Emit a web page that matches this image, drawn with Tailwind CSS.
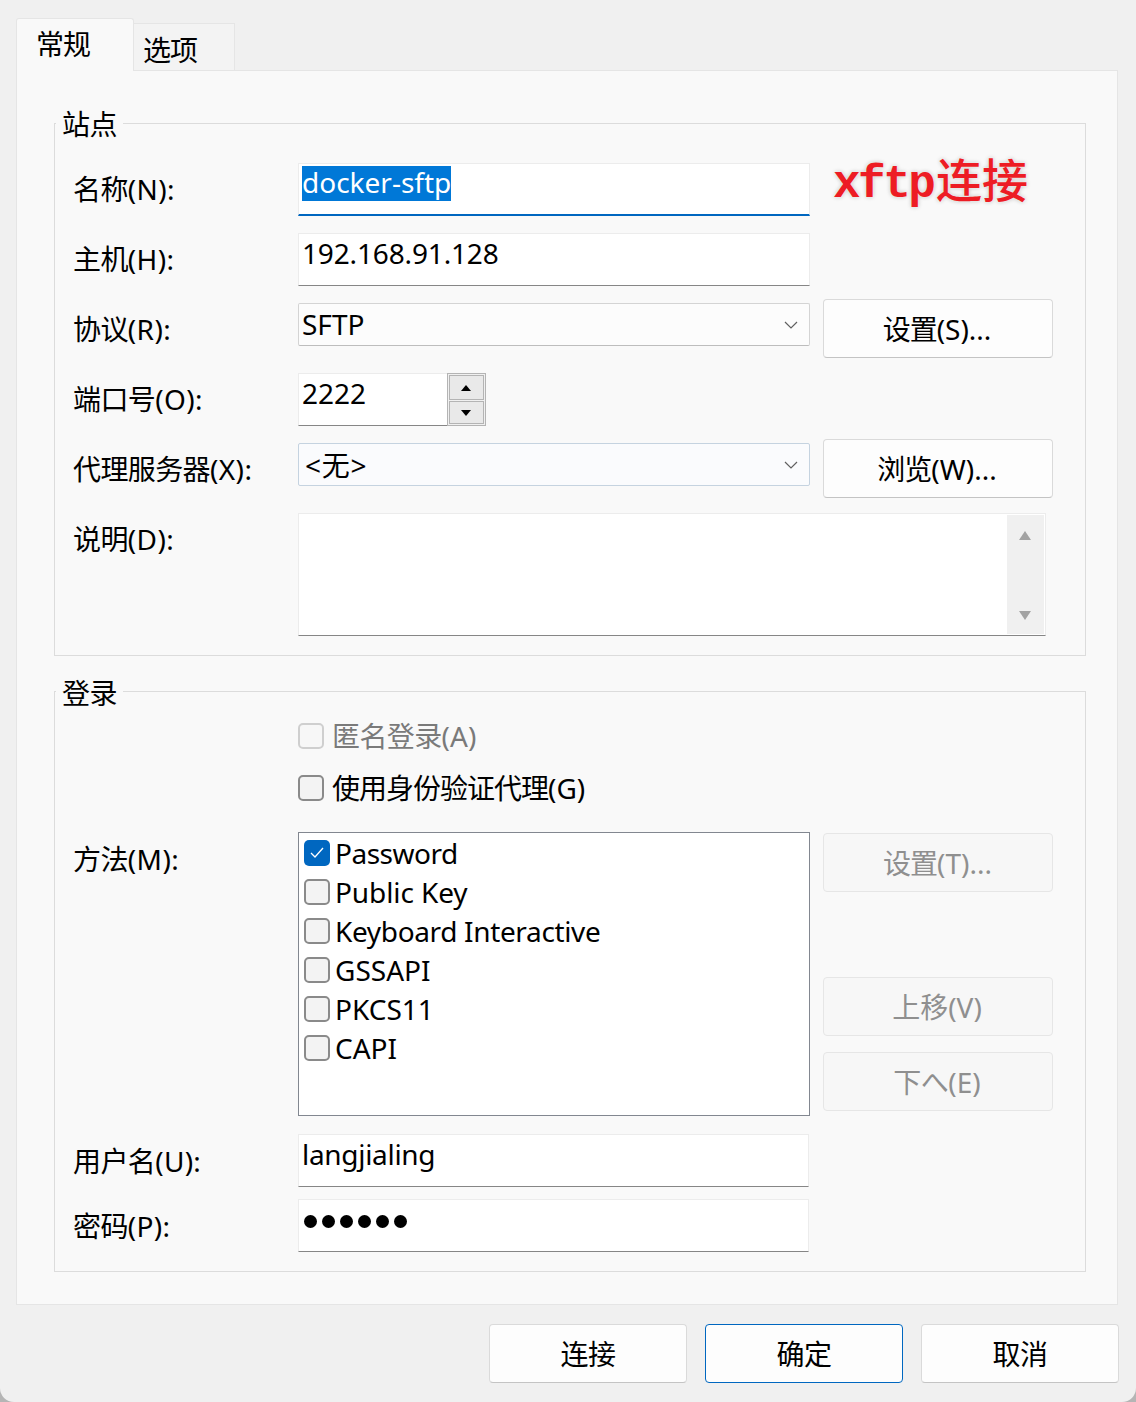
<!DOCTYPE html>
<html lang="en">
<head>
    <meta charset="UTF-8">
    <title>新建会话属性</title>
    <script src="https://cdn.jsdelivr.net/npm/@tailwindcss/browser@4"></script>
</head>
<body class="bg-[#b5b5b5]">
    <div class="w-[1136px] h-[1402px] overflow-hidden rounded-b-[14px] bg-[#f0f0f0] text-[28px] leading-[40px] text-black font-['Noto_Sans','Noto_Sans_CJK_SC',sans-serif]">
        <!-- Tabs -->
        <div class="flex items-end h-[71px] pl-[16px] relative z-10">
            <div class="w-[118px] h-[53px] pl-[19px] pt-[5px] tracking-[-1px] bg-[#f9f9f9] border border-b-0 border-[#e5e5e5] rounded-t-[3px]">常规</div>
            <div class="w-[101px] h-[48px] pl-[9px] pt-[6px] tracking-[-1px] bg-[#f3f3f3] border border-l-0 border-[#e5e5e5]">选项</div>
        </div>

        <!-- Panel -->
        <div class="mx-[16px] -mt-[1px] h-[1235px] px-[37px] pt-[52px] bg-[#f9f9f9] border border-[#e5e5e5] w-[1102px]">
            <!-- Site group -->
            <div class="relative h-[533px] w-[1032px] pl-[18px] pt-[39px] border border-[#dcdcdc]">
                <span class="absolute -top-[20px] left-[1px] px-[6px] tracking-[-0.5px] bg-[#f9f9f9]">站点</span>

                <div class="flex h-[70px]">
                    <div class="w-[225px] pt-[6px] tracking-[0.4px]"><span class="tracking-[-0.6px]">名称</span>(N):</div>
                    <div class="w-[512px] h-[53px] pl-[3px] pt-[2px] flex items-start bg-white border border-[#ececec] border-b-2 border-b-[#0067c0]">
                        <span class="h-[35px] leading-[33px] bg-[#0078d7] text-white">docker-sftp</span>
                    </div>
                    <div class="ml-[23px] -mt-[14px] h-[56px] flex items-center text-[#ed1c24] [text-shadow:0_0_2px_#fff,0_0_4px_#b5b5b5] whitespace-nowrap">
                        <span class="w-[103px] mt-[16px] text-[46px] font-bold tracking-[-2.5px] font-['Liberation_Mono',monospace]">xftp</span>
                        <span class="text-[46px] font-medium font-['Noto_Sans_CJK_SC',sans-serif]">连接</span>
                    </div>
                </div>

                <div class="flex h-[70px]">
                    <div class="w-[225px] pt-[6px] tracking-[0.4px]"><span class="tracking-[-0.6px]">主机</span>(H):</div>
                    <div class="w-[512px] h-[53px] pl-[3px] leading-[38px] tracking-[-0.15px] bg-white border border-[#ececec] border-b-[#868686]">192.168.91.128</div>
                </div>

                <div class="flex h-[70px]">
                    <div class="w-[225px] pt-[6px] tracking-[0.4px]"><span class="tracking-[-0.6px]">协议</span>(R):</div>
                    <div class="w-[512px] h-[43px] pl-[3px] flex items-center justify-between bg-[#fcfcfc] border border-[#d4d4d4] border-b-[#bdbdbd] rounded-[2px]">
                        <span class="-mt-[2px]">SFTP</span>
                        <svg class="mr-[11px]" width="14" height="8" viewBox="0 0 14 8" fill="none" stroke="#606060" stroke-width="1.2"><path d="M1 1l6 6 6-6"/></svg>
                    </div>
                    <button class="ml-[13px] -mt-[4px] pr-[2px] w-[230px] h-[59px] bg-[#fdfdfd] border border-[#dadada] border-b-[#c4c4c4] rounded-[4px]"><span class="tracking-[-1px]">设置</span>(S)...</button>
                </div>

                <div class="flex h-[70px]">
                    <div class="w-[225px] pt-[6px] tracking-[0.4px]"><span class="tracking-[-0.6px]">端口号</span>(O):</div>
                    <div class="w-[149px] h-[53px] pl-[3px] leading-[38px] bg-white border border-[#ececec] border-b-[#868686] border-r-0">2222</div>
                    <div class="w-[39px] h-[53px] flex flex-col justify-between p-[1px] bg-[#f0f0f0] border border-[#b4b4b4]">
                        <div class="h-[25px] flex items-center justify-center pr-[1px] bg-[#e9e9e9] border border-[#b4b4b4]">
                            <svg width="10" height="6" viewBox="0 0 10 6"><path d="M5 0l5 6H0z" fill="#000"/></svg>
                        </div>
                        <div class="h-[23px] flex items-center justify-center pr-[1px] bg-[#e9e9e9] border border-[#b4b4b4]">
                            <svg width="10" height="6" viewBox="0 0 10 6"><path d="M0 0h10L5 6z" fill="#000"/></svg>
                        </div>
                    </div>
                </div>

                <div class="flex h-[70px]">
                    <div class="w-[225px] pt-[6px] tracking-[0.4px]"><span class="tracking-[-0.6px]">代理服务器</span>(X):</div>
                    <div class="w-[512px] h-[43px] pl-[6px] flex items-center justify-between bg-[#fafbfd] border border-[#c5d3e0] rounded-[2px]">
                        <span class="tracking-[0.8px]">&lt;无&gt;</span>
                        <svg class="mr-[11px]" width="14" height="8" viewBox="0 0 14 8" fill="none" stroke="#606060" stroke-width="1.2"><path d="M1 1l6 6 6-6"/></svg>
                    </div>
                    <button class="ml-[13px] -mt-[4px] pr-[2px] w-[230px] h-[59px] bg-[#fdfdfd] border border-[#dadada] border-b-[#c4c4c4] rounded-[4px]"><span class="tracking-[-1px]">浏览</span>(W)...</button>
                </div>

                <div class="flex h-[123px]">
                    <div class="w-[225px] pt-[6px] tracking-[0.4px]"><span class="tracking-[-0.6px]">说明</span>(D):</div>
                    <div class="w-[748px] h-[123px] flex justify-end p-[1px] bg-white border border-[#ececec] border-b-[#868686]">
                        <div class="w-[37px] flex flex-col items-center justify-between pt-[16px] pb-[14px] pr-[1px] bg-[#f0f0f0]">
                            <svg width="12" height="9" viewBox="0 0 12 9"><path d="M6 0l6 9H0z" fill="#a3a3a3"/></svg>
                            <svg width="12" height="9" viewBox="0 0 12 9"><path d="M0 0h12L6 9z" fill="#a3a3a3"/></svg>
                        </div>
                    </div>
                </div>
            </div>

            <!-- Login group -->
            <div class="relative mt-[35px] h-[581px] w-[1032px] pl-[18px] pt-[31px] border border-[#dcdcdc]">
                <span class="absolute -top-[19px] left-[1px] px-[6px] tracking-[-0.5px] bg-[#f9f9f9]">登录</span>

                <div class="ml-[225px] flex items-center gap-[8px] h-[26px] text-[#7a7a7a]">
                    <span class="w-[26px] h-[26px] bg-[#f7f7f7] border-2 border-[#cfcfcf] rounded-[5px]"></span>
                    <span><span class="tracking-[-0.6px]">匿名登录</span>(A)</span>
                </div>
                <div class="ml-[225px] mt-[26px] flex items-center gap-[8px] h-[26px]">
                    <span class="w-[26px] h-[26px] bg-[#f3f3f3] border-2 border-[#8a8a8a] rounded-[5px]"></span>
                    <span><span class="tracking-[-1px]">使用身份验证代理</span>(G)</span>
                </div>

                <div class="flex mt-[31px]">
                    <div class="w-[225px] pt-[7px] tracking-[0.4px]"><span class="tracking-[-0.6px]">方法</span>(M):</div>
                    <div class="w-[512px] h-[284px] pl-[5px] bg-white border border-[#828790]">
                        <div class="flex items-center gap-[5px] h-[39px]">
                            <span class="w-[26px] h-[26px] flex items-center justify-center bg-[#0067c0] rounded-[5px]">
                                <svg width="14" height="11" viewBox="0 0 14 11" fill="none" stroke="#fff" stroke-width="1.3"><path d="M1 6l4 4 8-9"/></svg>
                            </span>
                            <span class="tracking-[-0.5px]">Password</span>
                        </div>
                        <div class="flex items-center gap-[5px] h-[39px]">
                            <span class="w-[26px] h-[26px] bg-[#f3f3f3] border-2 border-[#8a8a8a] rounded-[5px]"></span>
                            <span class="tracking-[-0.1px]">Public Key</span>
                        </div>
                        <div class="flex items-center gap-[5px] h-[39px]">
                            <span class="w-[26px] h-[26px] bg-[#f3f3f3] border-2 border-[#8a8a8a] rounded-[5px]"></span>
                            <span class="tracking-[-0.35px]">Keyboard Interactive</span>
                        </div>
                        <div class="flex items-center gap-[5px] h-[39px]">
                            <span class="w-[26px] h-[26px] bg-[#f3f3f3] border-2 border-[#8a8a8a] rounded-[5px]"></span>
                            <span>GSSAPI</span>
                        </div>
                        <div class="flex items-center gap-[5px] h-[39px]">
                            <span class="w-[26px] h-[26px] bg-[#f3f3f3] border-2 border-[#8a8a8a] rounded-[5px]"></span>
                            <span>PKCS11</span>
                        </div>
                        <div class="flex items-center gap-[5px] h-[39px]">
                            <span class="w-[26px] h-[26px] bg-[#f3f3f3] border-2 border-[#8a8a8a] rounded-[5px]"></span>
                            <span>CAPI</span>
                        </div>
                    </div>
                    <div class="ml-[13px] pt-[1px] w-[230px] flex flex-col text-[#8f8f8f]">
                        <button class="h-[59px] pr-[1px] bg-[#f7f7f7] border border-[#e6e6e6] rounded-[4px]"><span class="tracking-[-1px]">设置</span>(T)...</button>
                        <button class="mt-[85px] h-[59px] pr-[2px] bg-[#f7f7f7] border border-[#e6e6e6] rounded-[4px]">上移(V)</button>
                        <button class="mt-[16px] h-[59px] pr-[2px] bg-[#f7f7f7] border border-[#e6e6e6] rounded-[4px]"><span class="tracking-[-0.5px]">下へ</span>(E)</button>
                    </div>
                </div>

                <div class="flex mt-[18px]">
                    <div class="w-[225px] pt-[7px] tracking-[0.3px]"><span class="tracking-[-0.6px]">用户名</span>(U):</div>
                    <div class="w-[511px] h-[53px] pl-[3px] leading-[38px] tracking-[-0.3px] bg-white border border-[#ececec] border-b-[#868686]">langjialing</div>
                </div>
                <div class="flex mt-[12px]">
                    <div class="w-[225px] pt-[7px] tracking-[0.3px]"><span class="tracking-[-0.6px]">密码</span>(P):</div>
                    <div class="w-[511px] h-[53px] pl-[5px] pt-[15px] flex gap-[5px] items-start bg-white border border-[#ececec] border-b-[#868686]">
                        <span class="w-[13px] h-[13px] rounded-full bg-black"></span>
                        <span class="w-[13px] h-[13px] rounded-full bg-black"></span>
                        <span class="w-[13px] h-[13px] rounded-full bg-black"></span>
                        <span class="w-[13px] h-[13px] rounded-full bg-black"></span>
                        <span class="w-[13px] h-[13px] rounded-full bg-black"></span>
                        <span class="w-[13px] h-[13px] rounded-full bg-black"></span>
                    </div>
                </div>
            </div>
        </div>

        <!-- Footer buttons -->
        <div class="flex justify-end gap-[18px] mt-[19px] pr-[17px]">
            <button class="w-[198px] h-[59px] tracking-[-0.5px] bg-[#fdfdfd] border border-[#dadada] border-b-[#c4c4c4] rounded-[4px]">连接</button>
            <button class="w-[198px] h-[59px] tracking-[-0.5px] bg-[#fdfdfd] border border-[#0067c0] rounded-[4px]">确定</button>
            <button class="w-[198px] h-[59px] tracking-[-0.5px] bg-[#fdfdfd] border border-[#dadada] border-b-[#c4c4c4] rounded-[4px]">取消</button>
        </div>
    </div>
</body>
</html>
